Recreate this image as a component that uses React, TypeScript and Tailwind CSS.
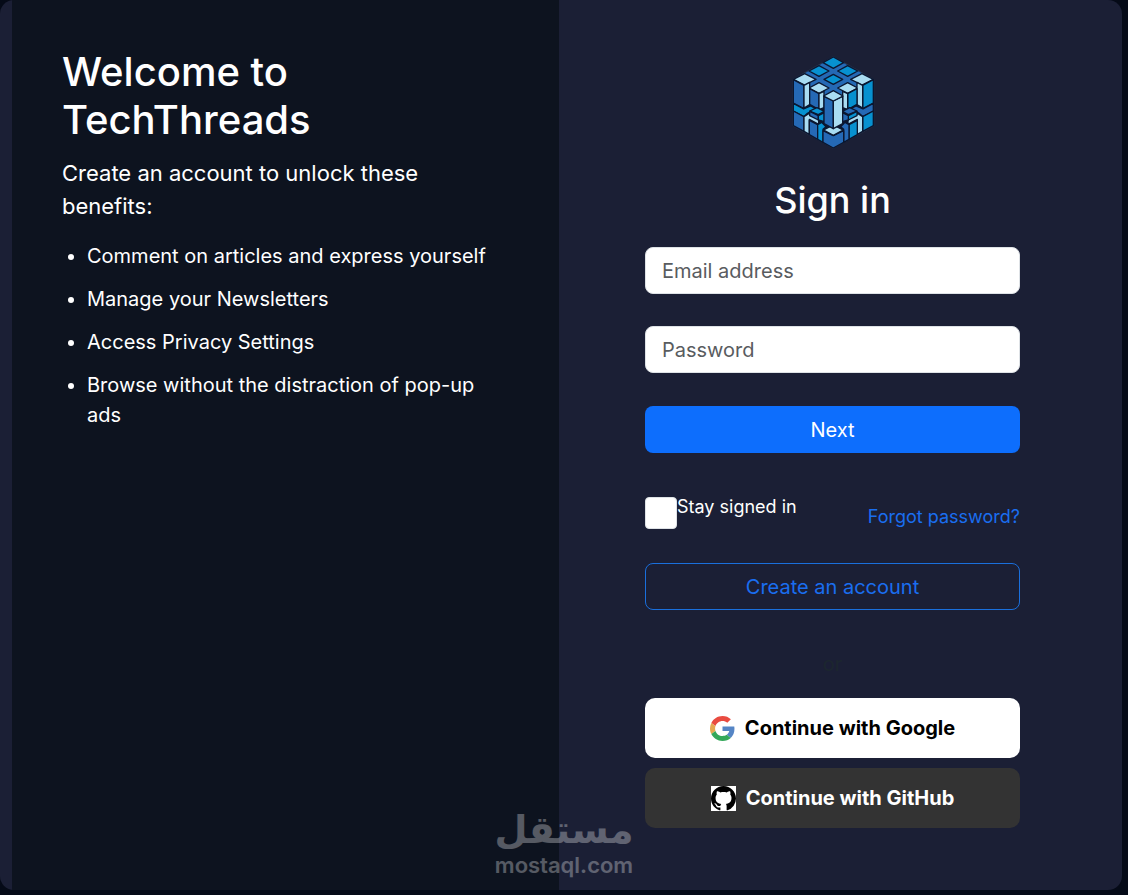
import { useState } from "react";
import type { FormEvent } from "react";

const benefits = [
  "Comment on articles and express yourself",
  "Manage your Newsletters",
  "Access Privacy Settings",
  "Browse without the distraction of pop-up ads",
];

function CubeLogo() {
  return (
    <svg width="100" height="105" viewBox="0 0 300 315" role="img" aria-label="TechThreads">
      <polygon points="151,20 272,88 272,228 151,295 30,228 30,88" fill="#0b1730" stroke="#39465c" strokeWidth="2" />
      {/* top face */}
      <polygon points="151,22 269,88 151,154 33,88" fill="#2569b5" />
      <g stroke="#0b1730" strokeWidth="4" strokeLinejoin="round">
        <g fill="#0791d0">
          <polygon points="151,21 182,38 151,55 120,38" />
          <polygon points="108,47 138,63 108,79 78,63" />
          <polygon points="194,47 224,63 194,79 164,63" />
          <polygon points="151,73 179,88 151,103 123,88" />
        </g>
        <g fill="#a9dcf2">
          <polygon points="31,88 65,71 99,88 65,105" />
          <polygon points="203,88 237,71 271,88 237,105" />
          <polygon points="78,114 108,98 138,114 108,130" />
          <polygon points="164,114 194,98 224,114 194,130" />
        </g>
        {/* left face */}
        <polygon points="31,89 63,106 63,176 31,159" fill="#2569b5" />
        <polygon points="63,106 80,97 80,164 63,174" fill="#a9dcf2" />
        <polygon points="80,116 108,131 108,179 80,163" fill="#2569b5" />
        <polygon points="108,131 123,124 123,173 108,179" fill="#a9dcf2" />
        <polygon points="31,160 62,177 83,168 98,176 72,191 62,200 31,183" fill="#0791d0" />
        <polygon points="31,183 63,200 63,244 31,227" fill="#2569b5" />
        <polygon points="63,200 77,191 107,208 107,223 79,208 79,253 63,244" fill="#a9dcf2" />
        <polygon points="80,183 102,173 124,184 106,194" fill="#0791d0" />
        <polygon points="80,184 106,197 106,210 80,197" fill="#2569b5" />
        <polygon points="106,197 124,188 124,215 106,210" fill="#0791d0" />
        <polygon points="79,211 104,224 104,268 79,254" fill="#2569b5" />
        <polygon points="104,224 116,217 129,230 120,238 120,277 104,268" fill="#0791d0" />
        {/* right face */}
        <polygon points="271,89 239,106 239,176 271,159" fill="#0791d0" />
        <polygon points="239,106 222,97 222,164 239,174" fill="#a9dcf2" />
        <polygon points="222,116 194,131 194,179 222,163" fill="#0791d0" />
        <polygon points="194,131 179,124 179,173 194,179" fill="#a9dcf2" />
        <polygon points="271,160 240,177 219,168 204,176 230,191 240,200 271,183" fill="#2569b5" />
        <polygon points="271,183 239,200 239,244 271,227" fill="#0791d0" />
        <polygon points="239,200 225,191 195,208 195,223 223,208 223,253 239,244" fill="#a9dcf2" />
        <polygon points="222,183 200,173 178,184 196,194" fill="#2569b5" />
        <polygon points="222,184 196,197 196,210 222,197" fill="#0791d0" />
        <polygon points="196,197 178,188 178,215 196,210" fill="#2569b5" />
        <polygon points="223,211 198,224 198,268 223,254" fill="#0791d0" />
        <polygon points="198,224 186,217 173,230 182,238 182,277 198,268" fill="#2569b5" />
        {/* bottom corner */}
        <polygon points="120,242 151,257 182,242 182,277 151,294 120,277" fill="#2569b5" />
        <polygon points="122,240 151,225 180,240 151,256" fill="#a9dcf2" />
        {/* centre pillar */}
        <polygon points="123,139 151,153 151,236 123,221" fill="#2569b5" />
        <polygon points="151,153 179,139 179,221 151,236" fill="#a9dcf2" />
        <polygon points="122,138 151,122 180,138 151,153" fill="#a9dcf2" />
      </g>
    </svg>
  );
}

function GoogleIcon() {
  return (
    <svg width="25" height="25" viewBox="0 0 48 48" aria-hidden="true">
      <path fill="#e94b40" d="M24 9.5c3.54 0 6.71 1.22 9.21 3.6l6.85-6.85C35.9 2.38 30.47 0 24 0 14.62 0 6.51 5.38 2.56 13.22l7.98 6.19C12.43 13.72 17.74 9.5 24 9.5z" />
      <path fill="#5585c5" d="M46.98 24.55c0-1.57-.15-3.09-.38-4.55H24v9.02h12.94c-.58 2.96-2.26 5.48-4.78 7.18l7.73 6c4.51-4.18 7.09-10.36 7.09-17.65z" />
      <path fill="#e5a850" d="M10.53 28.59c-.48-1.45-.76-2.99-.76-4.59s.27-3.14.76-4.59l-7.98-6.19C.92 16.46 0 20.12 0 24c0 3.88.92 7.54 2.56 10.78l7.97-6.19z" />
      <path fill="#34a85a" d="M24 48c6.48 0 11.93-2.13 15.89-5.81l-7.73-6c-2.15 1.45-4.92 2.3-8.16 2.3-6.26 0-11.57-4.22-13.47-9.91l-7.98 6.19C6.51 42.62 14.62 48 24 48z" />
    </svg>
  );
}

function GithubIcon() {
  return (
    <svg width="25" height="25" viewBox="0 0 16 16" className="bg-white" aria-hidden="true">
      <path
        fill="#000"
        d="M8 0C3.58 0 0 3.58 0 8c0 3.54 2.29 6.53 5.47 7.59.4.07.55-.17.55-.38 0-.19-.01-.82-.01-1.49-2.01.37-2.53-.49-2.69-.94-.09-.23-.48-.94-.82-1.13-.28-.15-.68-.52-.01-.53.63-.01 1.08.58 1.23.82.72 1.21 1.87.87 2.33.66.07-.52.28-.87.51-1.07-1.78-.2-3.64-.89-3.64-3.95 0-.87.31-1.59.82-2.15-.08-.2-.36-1.02.08-2.12 0 0 .67-.21 2.2.82.64-.18 1.32-.27 2-.27.68 0 1.36.09 2 .27 1.53-1.04 2.2-.82 2.2-.82.44 1.1.16 1.92.08 2.12.51.56.82 1.27.82 2.15 0 3.07-1.87 3.75-3.65 3.95.29.25.54.73.54 1.48 0 1.07-.01 1.93-.01 2.2 0 .21.15.46.55.38A8.013 8.013 0 0016 8c0-4.42-3.58-8-8-8z"
      />
    </svg>
  );
}

export default function App() {
  const [email, setEmail] = useState("");
  const [password, setPassword] = useState("");
  const [stay, setStay] = useState(false);

  function handleSubmit(e: FormEvent) {
    e.preventDefault();
  }

  return (
    <div className="relative flex min-h-screen bg-[#050a17] pr-1.5 pb-[5px] font-[Inter,sans-serif] text-white">
      <main className="grid w-full grid-cols-[547fr_563fr] overflow-hidden rounded-[14px] bg-[#1b1f35] pl-3">
        <section className="bg-[#0d131f] px-[50px] py-12">
          <h1 className="text-[40px] leading-[48px] font-medium">Welcome to TechThreads</h1>
          <p className="mt-[13px] text-[22px] leading-[33px]">Create an account to unlock these benefits:</p>
          <ul className="mt-[18px] flex list-disc flex-col gap-[13px] pl-[25px] text-xl leading-[30px]">
            {benefits.map((b) => (
              <li key={b}>{b}</li>
            ))}
          </ul>
        </section>

        <section className="pt-[50px] pr-4 pb-12">
          <form onSubmit={handleSubmit} className="mx-auto flex w-full max-w-[375px] flex-col">
            <div className="flex justify-center">
              <CubeLogo />
            </div>
            <h2 className="mt-[21px] text-center text-4xl leading-[48px] font-medium">Sign in</h2>

            <input
              type="email"
              aria-label="Email address"
              placeholder="Email address"
              value={email}
              onChange={(e) => setEmail(e.target.value)}
              className="mt-[23px] h-[47px] w-full rounded-lg border border-[#dee2e6] bg-white px-4 text-xl text-[#212529] placeholder:text-[#595c5f]"
            />
            <input
              type="password"
              aria-label="Password"
              placeholder="Password"
              value={password}
              onChange={(e) => setPassword(e.target.value)}
              className="mt-8 h-[47px] w-full rounded-lg border border-[#dee2e6] bg-white px-4 text-xl text-[#212529] placeholder:text-[#595c5f]"
            />
            <button type="submit" className="mt-[33px] h-[47px] rounded-lg bg-[#0d6efd] text-xl">
              Next
            </button>

            <div className="mt-10 flex h-12 items-center justify-between text-lg">
              <div className="flex self-start">
                <input
                  id="stay"
                  type="checkbox"
                  checked={stay}
                  onChange={(e) => setStay(e.target.checked)}
                  className="mt-1 size-8 appearance-none rounded border border-[#dee2e6] bg-white checked:bg-[#0d6efd]"
                />
                <label htmlFor="stay">Stay signed in</label>
              </div>
              <a href="#forgot" className="text-[#1a6ef0]">
                Forgot password?
              </a>
            </div>

            <button type="button" className="mt-[22px] h-[47px] rounded-lg border border-[#1a6fdc] text-xl text-[#1a6ef0]">
              Create an account
            </button>

            <p className="mt-10 text-center text-xl text-[#1c262f]">or</p>

            <div className="mt-5 flex flex-col gap-2.5 text-xl font-bold">
              <button type="button" className="flex h-[60px] items-center justify-center gap-2.5 rounded-[10px] bg-white text-black">
                <GoogleIcon />
                Continue with Google
              </button>
              <button type="button" className="flex h-[60px] items-center justify-center gap-2.5 rounded-[10px] bg-[#333333]">
                <GithubIcon />
                Continue with GitHub
              </button>
            </div>
          </form>
        </section>
      </main>

      {/* watermark */}
      <div className="pointer-events-none absolute inset-x-0 bottom-[19px] flex flex-col items-center gap-1 text-white opacity-30">
        <span lang="ar" dir="rtl" className="font-['DejaVu_Sans',sans-serif] text-[38px] leading-[40px] font-bold">
          مستقل
        </span>
        <span className="text-[22px] leading-[22px] font-semibold">mostaql.com</span>
      </div>
    </div>
  );
}
